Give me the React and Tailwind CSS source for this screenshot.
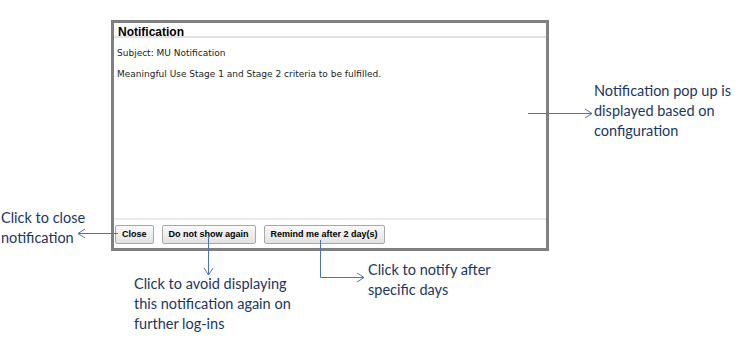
export default function App() {
  return (
    <div className="relative w-[740px] h-[347px] overflow-hidden bg-white">
      <Dialog />
      <Arrows />

      <Note className="left-[594px] top-[81px]">
        Notification pop up is
        <br />
        displayed based on
        <br />
        configuration
      </Note>
      <Note className="left-[1px] top-[208px]">
        Click to close
        <br />
        notification
      </Note>
      <Note className="left-[134px] top-[274px]">
        Click to avoid displaying
        <br />
        this notification again on
        <br />
        further log-ins
      </Note>
      <Note className="left-[368px] top-[260px]">
        Click to notify after
        <br />
        specific days
      </Note>
    </div>
  );
}

function Dialog() {
  return (
    <div className="absolute left-[111px] top-[20px] w-[438px] h-[231px] border-[3px] border-[#808080] bg-white flex flex-col font-['Liberation_Sans',Arial,sans-serif]">
      {/* header */}
      <div className="h-[15px] px-[4px] pt-[3px] text-[12px] leading-[12px] font-bold text-black border-b-2 border-[#e2e2e2]">
        Notification
      </div>

      {/* body */}
      <div className="flex-1 px-[3px] pt-[10px] text-[9px] leading-[11px] text-[#222] font-['DejaVu_Sans',Verdana,sans-serif]">
        <p>Subject: MU Notification</p>
        <p className="mt-[10px]">Meaningful Use Stage 1 and Stage 2 criteria to be fulfilled.</p>
      </div>

      {/* footer */}
      <div className="h-[30px] border-t-2 border-[#ebebeb] px-[1px] pt-[5px] flex items-start gap-[8px]">
        <Btn>Close</Btn>
        <Btn>Do not show again</Btn>
        <Btn>Remind me after 2 day(s)</Btn>
      </div>
    </div>
  );
}

function Btn({ children }) {
  return (
    <button className="h-[19px] px-[6px] border border-[#a9a9a9] rounded-[2px] bg-gradient-to-b from-[#fafafa] to-[#e2e2e2] text-[9px] font-bold text-black leading-none">
      {children}
    </button>
  );
}

function Note({ className, children }) {
  return (
    <div
      className={
        "absolute text-[14.5px] leading-[20px] text-[#1c3660] whitespace-nowrap font-['Lato','Open_Sans',sans-serif] " +
        className
      }
    >
      {children}
    </div>
  );
}

function Arrows() {
  const c = "#4a74b8";
  return (
    <svg
      className="absolute inset-0 pointer-events-none"
      width="740"
      height="347"
      viewBox="0 0 740 347"
      fill="none"
      stroke={c}
      strokeWidth="1"
    >
      {/* pop up arrow */}
      <path d="M528 113.5H592" />
      <path d="M585 109L592 113.5L585 118" />

      {/* close arrow */}
      <path d="M78 233.5H118" />
      <path d="M85 229L78 233.5L85 238" />

      {/* do not show arrow */}
      <path d="M208.5 236V275" />
      <path d="M204 268L208.5 275L213 268" />

      {/* remind arrow */}
      <path d="M320.5 240V277.5H364" />
      <path d="M357 273L364 277.5L357 282" />
    </svg>
  );
}
